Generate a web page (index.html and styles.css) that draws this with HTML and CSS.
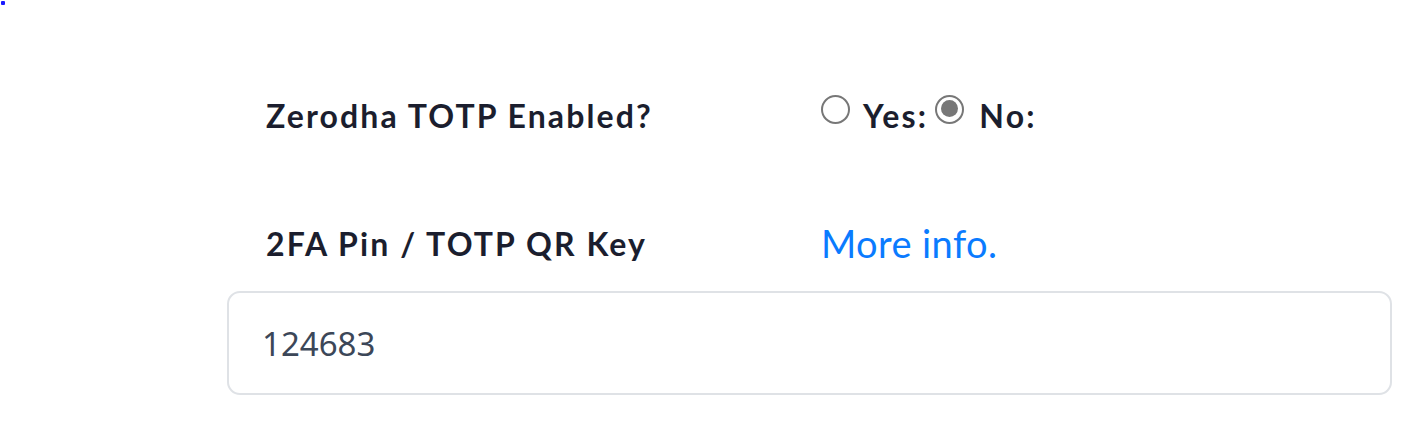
FILE: index.html
```html
<!DOCTYPE html>
<html>
<head>
<meta charset="utf-8">
<link rel="stylesheet" href="styles.css">
</head>
<body>
<div class="dot"></div>
<div class="form">
  <div class="row row-first">
    <div class="label">Zerodha TOTP Enabled?</div>
    <div class="value radios">
      <span class="radio"></span><span class="opt">Yes:</span>
      <span class="radio checked"></span><span class="opt">No:</span>
    </div>
  </div>
  <div class="row row-second">
    <div class="label">2FA Pin / TOTP QR Key</div>
    <div class="value"><a class="link" href="#">More info.</a></div>
  </div>
  <div class="input">124683</div>
</div>
</body>
</html>
```
FILE: styles.css
```css
html, body {
  margin: 0;
  padding: 0;
  background: #fff;
}
body {
  font-family: Lato, "Noto Sans", sans-serif;
  color: #1b1e2e;
}
.dot {
  width: 4px;
  height: 4px;
  margin: 1px 0 0 1px;
  background: #1a1aff;
  border-radius: 1px;
}
.form {
  margin-left: 227px;
  width: 1165px;
}
.row {
  display: flex;
  align-items: center;
  padding-left: 39px;
  height: 60px;
}
.row-first {
  margin-top: 80px;
}
.row-second {
  margin-top: 68px;
}
.label {
  width: 555px;
  font-size: 32px;
  font-weight: 700;
  letter-spacing: 2.1px;
  color: #1b1e2e;
}
.value {
  display: flex;
  align-items: center;
}
.radios .radio {
  width: 29px;
  height: 29px;
  box-sizing: border-box;
  border: 2.5px solid #777;
  border-radius: 50%;
  background: #fff;
  position: relative;
  margin-right: 13px;
  margin-bottom: 12px;
}
.radios .radio.checked {
  margin-right: 15px;
}
.radios .radio.checked::after {
  content: "";
  position: absolute;
  left: 3.5px;
  top: 3.5px;
  width: 17px;
  height: 17px;
  border-radius: 50%;
  background: #777;
}
.opt {
  font-size: 32px;
  font-weight: 700;
  letter-spacing: 2.2px;
  margin-right: 7px;
}
.link {
  font-size: 38px;
  letter-spacing: 0.4px;
  color: #0a7bff;
  text-decoration: none;
  font-weight: 400;
}
.input {
  margin-top: 18px;
  height: 104px;
  box-sizing: border-box;
  border: 2px solid #dfe2e6;
  border-radius: 13px;
  padding-left: 33px;
  display: flex;
  align-items: center;
  font-family: "Noto Sans", sans-serif;
  font-size: 33px;
  color: #3c4758;
}
```
